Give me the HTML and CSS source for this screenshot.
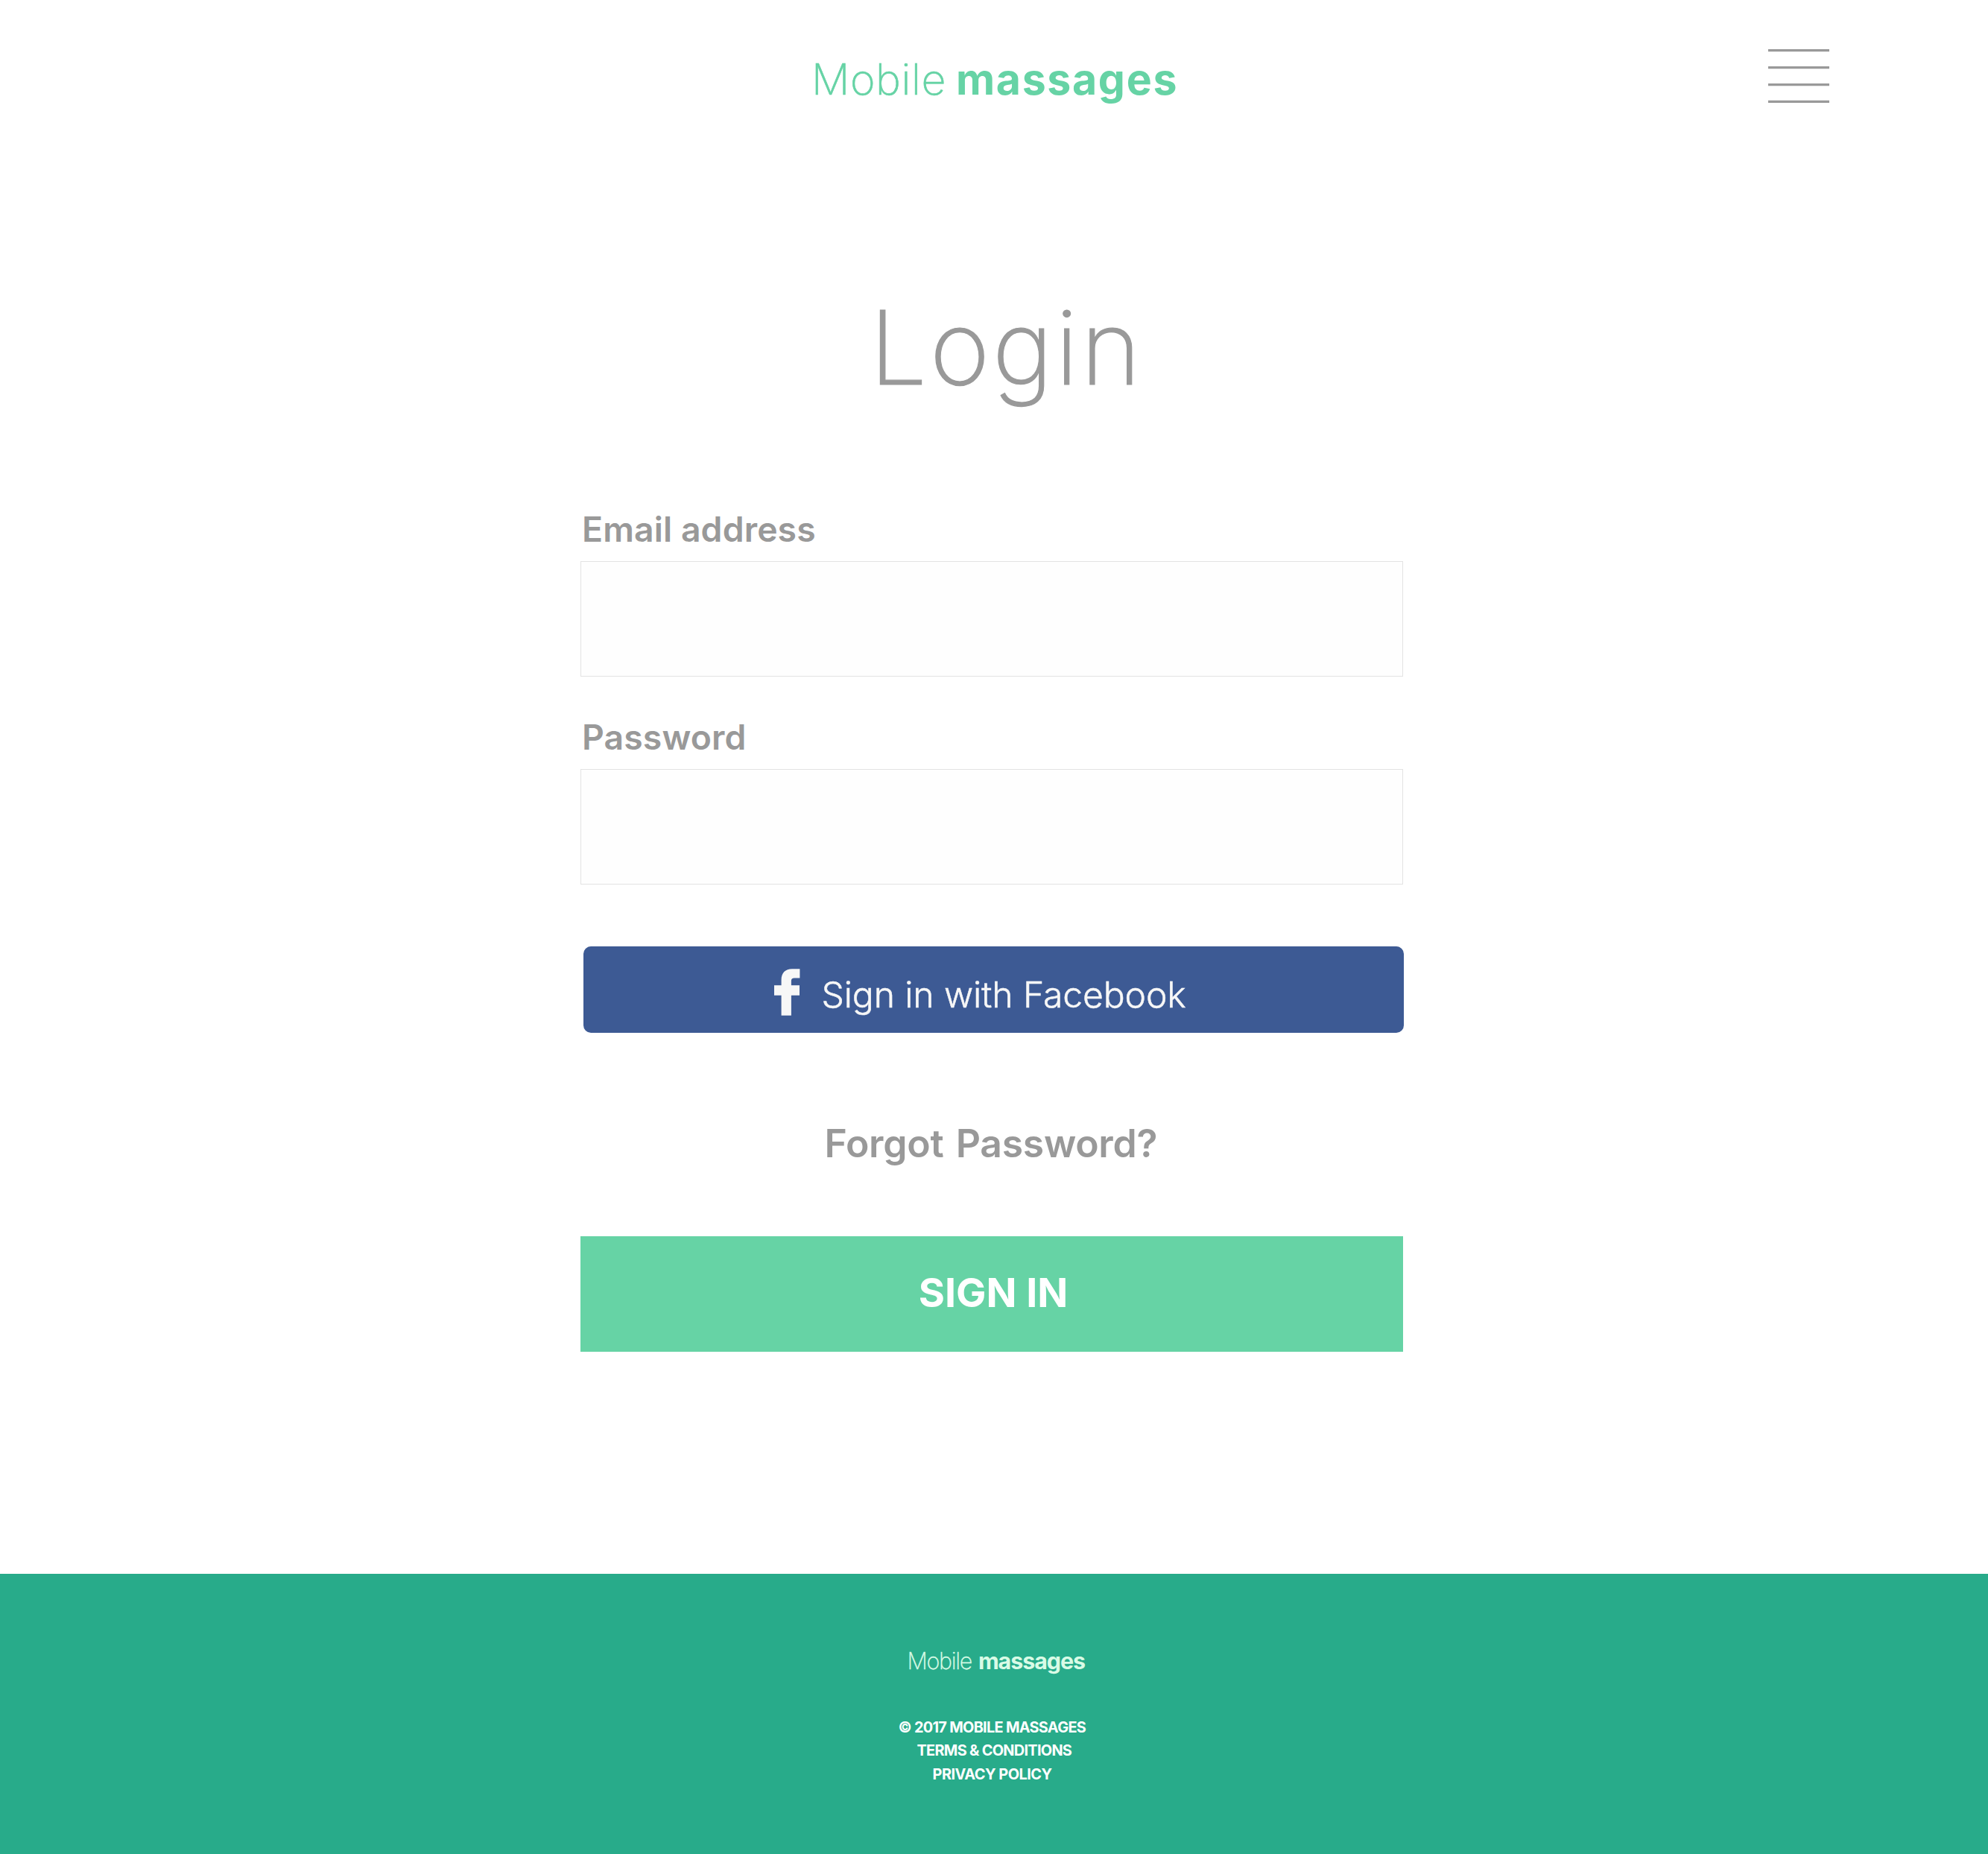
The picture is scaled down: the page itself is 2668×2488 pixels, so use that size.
FILE: index.html
```html
<!DOCTYPE html>
<html lang="en">
<head>
<meta charset="utf-8">
<title>Mobile massages – Login</title>
<link rel="stylesheet" href="styles.css">
</head>
<body>
<header class="header">
  <a class="brand"><span class="brand-light">Mobile</span><span class="brand-bold">massages</span></a>
  <svg class="menu" width="82" height="74" viewBox="0 0 82 74" role="button" aria-label="Menu">
    <path d="M0 2.7h82M0 25.6h82M0 48.6h82M0 71.4h82" stroke="#999" stroke-width="3.2"/>
  </svg>
</header>
<main class="main">
  <h1 class="title">Login</h1>
  <form class="form">
    <label class="label" for="email">Email address</label>
    <input class="input" id="email" type="email">
    <label class="label" for="password">Password</label>
    <input class="input" id="password" type="password">
    <button class="facebook" type="button">
      <svg class="facebook-icon" width="35" height="63" viewBox="0 0 35 63">
        <path fill="#f7f7f7" d="M9.6 62.8V35.7H0V22.3h9.6V15C9.6 5.6 15 .2 24 .2h10.4v12.2h-7.2c-3.2 0-4.3 1.3-4.3 4.1v5.8H34v13.4H22.9v27.1z"/>
      </svg>
      <span class="facebook-text">Sign in with Facebook</span>
    </button>
    <a class="forgot">Forgot Password?</a>
    <button class="submit" type="button">SIGN IN</button>
  </form>
</main>
<footer class="footer">
  <a class="brand brand-small"><span class="brand-light">Mobile</span><span class="brand-bold">massages</span></a>
  <ul class="links">
    <li class="copyright">© 2017 MOBILE MASSAGES</li>
    <li class="terms">TERMS &amp; CONDITIONS</li>
    <li class="privacy">PRIVACY POLICY</li>
  </ul>
</footer>
</body>
</html>
```
FILE: styles.css
```css
* { box-sizing: border-box; }

body {
  margin: 0;
  min-height: 2488px;
  display: flex;
  flex-direction: column;
  background: #fff;
  color: #999;
  font-family: Inter, "Liberation Sans", sans-serif;
}

.header {
  display: flex;
  justify-content: space-between;
  align-items: flex-start;
  height: 160px;
  padding: 65px 213px 0 1089px;
}

.brand {
  display: flex;
  gap: 13px;
  margin-top: 12px;
  color: #66d3a5;
  font-size: 57.2px;
  line-height: 60px;
  white-space: nowrap;
}
.brand-light {
  font-weight: 200;
  letter-spacing: 0.61px;
  -webkit-text-stroke: 0.6px currentColor;
}
.brand-bold { font-weight: 700; letter-spacing: 1.66px; }

.menu { display: block; }

.main {
  flex: 1;
  width: 1105px;
  margin-left: 779px;
}

.title {
  margin: 236px 0 149px;
  padding-left: 388px;
  font-size: 137.5px;
  font-weight: 200;
  line-height: 140px;
  letter-spacing: 3.3px;
  -webkit-text-stroke: 1.2px currentColor;
}

.form {
  display: flex;
  flex-direction: column;
}

.label {
  margin-bottom: 18px;
  padding-left: 2px;
  font-size: 46.3px;
  font-weight: 600;
  line-height: 50px;
  letter-spacing: 0.12px;
}

.input {
  width: 1104px;
  height: 155px;
  margin: 0 0 56px;
  padding: 0 24px;
  border: 1px solid #e3e3e3;
  border-radius: 0;
  background: #fefefe;
  color: inherit;
  font: inherit;
  font-size: 46px;
}

.facebook {
  display: flex;
  align-items: flex-start;
  width: 1101px;
  height: 116px;
  margin: 27px 0 118px 4px;
  padding: 30px 0 0 256px;
  border: 0;
  border-radius: 10px;
  background: #3d5a94;
  color: #f7f7f7;
  font-family: inherit;
}
.facebook-icon { display: block; }
.facebook-text {
  margin: 5px 0 0 28.5px;
  font-size: 48.1px;
  font-weight: 300;
  line-height: 60px;
  letter-spacing: -0.13px;
  -webkit-text-stroke: 0.5px currentColor;
}

.forgot {
  padding-left: 327.5px;
  font-size: 51.7px;
  font-weight: 600;
  line-height: 60px;
  letter-spacing: -0.3px;
  word-spacing: 3.7px;
}

.submit {
  width: 1104px;
  height: 155px;
  margin: 95px 0 0;
  padding: 0 0 4px 4px;
  border: 0;
  background: #66d3a5;
  color: #fff;
  font-family: inherit;
  font-size: 53.8px;
  font-weight: 700;
}

.footer {
  height: 376px;
  padding-top: 99px;
  background: #28ab8a;
  color: #fff;
}

.brand-small {
  gap: 9px;
  margin: 0 0 56px 1217.5px;
  color: #d9fbe6;
  font-size: 30.4px;
  line-height: 36px;
}
.brand-small .brand-light {
  letter-spacing: -1.3px;
  -webkit-text-stroke-width: 0.3px;
}
.brand-small .brand-bold { letter-spacing: -1.03px; }

.links {
  display: flex;
  flex-direction: column;
  margin: 0;
  padding: 0;
  list-style: none;
  font-size: 19.9px;
  font-weight: 700;
  line-height: 31.4px;
}
.copyright { padding-left: 1205.5px; letter-spacing: -0.71px; }
.terms { padding-left: 1230.5px; letter-spacing: -0.7px; }
.privacy { padding-left: 1251.5px; letter-spacing: -0.5px; }
```
